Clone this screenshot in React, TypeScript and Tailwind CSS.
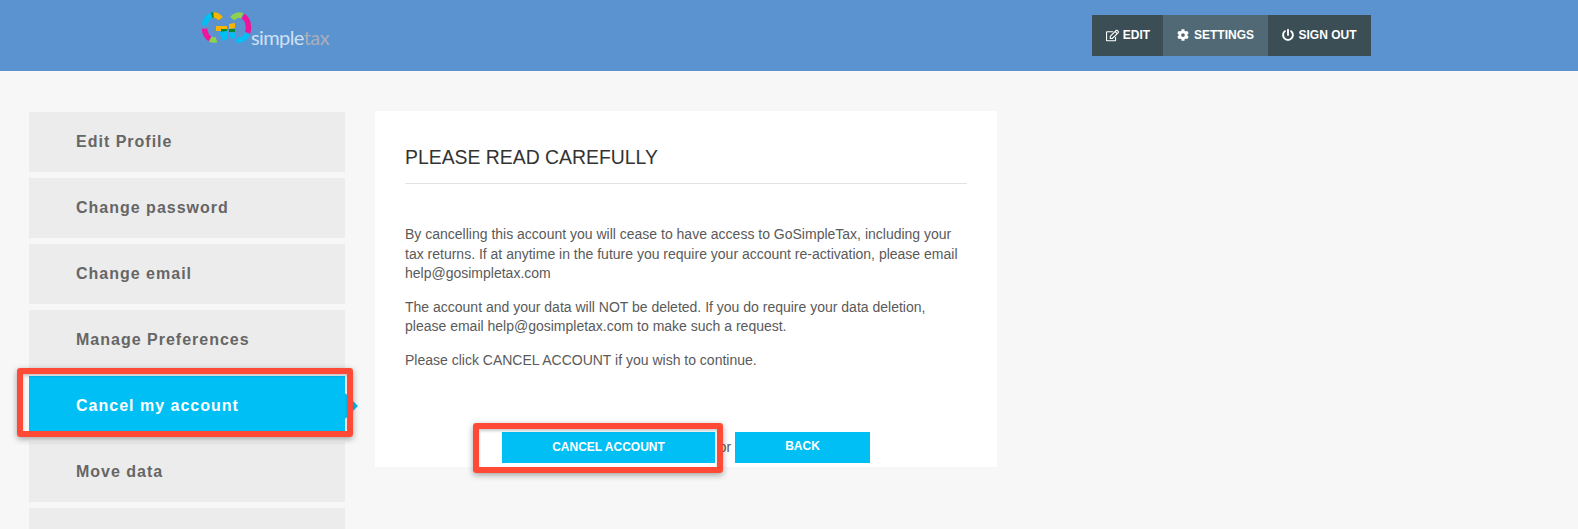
import { FaCog, FaPowerOff, FaRegEdit } from "react-icons/fa";

const sans = "font-['Liberation_Sans',Arial,sans-serif]";

const menuItems = [
  "Edit Profile",
  "Change password",
  "Change email",
  "Manage Preferences",
  "Cancel my account",
  "Move data",
  "",
];

// oval ring segment from angle a to b (degrees, clockwise from top)
function arc(cx: number, cy: number, a: number, b: number) {
  const rx = 9.5;
  const ry = 12.5;
  const p = (d: number) => {
    const t = (d * Math.PI) / 180;
    return `${(cx + rx * Math.sin(t)).toFixed(2)} ${(cy - ry * Math.cos(t)).toFixed(2)}`;
  };
  return `M${p(a)}A${rx} ${ry} 0 0 1 ${p(b)}`;
}

function Logo() {
  const segments: [number, number, number, number, string][] = [
    [214, 27.5, 280, 345, "#00bff5"],
    [214, 27.5, 345, 358, "#0a8a2c"],
    [214, 27.5, 358, 45, "#f7b500"],
    [214, 27.5, 205, 265, "#f0149a"],
    [214, 27.5, 165, 203, "#8fd14f"],
    [239, 27.5, 315, 20, "#8fd14f"],
    [239, 27.5, 25, 115, "#f0149a"],
    [239, 27.5, 120, 195, "#00bff5"],
  ];
  return (
    <div className="relative ml-[195px] h-[71px] w-[145px]">
      <svg width="70" height="45" viewBox="195 5 70 45" className="absolute left-0 top-[5px] block">
        {segments.map(([cx, cy, a, b, c], i) => (
          <path key={i} d={arc(cx, cy, a, b)} fill="none" stroke={c} strokeWidth="5.5" />
        ))}
        <path d="M216 26h11v5h-11z" fill="#f7b500" />
        <path d="M221 29h6v3h-6z" fill="#0a8a2c" />
        <path d="M219 32l8-1v8l-4 2z" fill="#00bff5" />
        <path d="M229 24l6-1v5l-6 1z" fill="#f7b500" />
        <path d="M229 29h6v3h-6z" fill="#0a8a2c" />
        <path d="M229 32l7 1-1 5-4 1z" fill="#00bff5" />
      </svg>
      <span className="absolute left-[56px] top-[24px] font-['Lato',sans-serif] text-[20px] font-normal leading-[26px] tracking-[-0.6px] text-[#cfe0f2]">
        simple<span className="text-[#a9afb8]">tax</span>
      </span>
    </div>
  );
}

export default function App() {
  return (
    <div className={`relative h-[529px] w-[1578px] overflow-hidden bg-[#f7f7f7] ${sans}`}>
      <header className="flex h-[71px] bg-[#5b93d1]">
        <Logo />
        <nav className="ml-[752px] mt-[15px] flex h-[41px] text-[12px] font-bold text-white">
          <a className="flex w-[71px] items-center justify-center gap-[4px] bg-[#3b4e55] pb-[1px] pl-[1px]">
            <FaRegEdit size={13} />
            EDIT
          </a>
          <a className="flex w-[105px] items-center justify-center gap-[5px] bg-[#506974] pb-[1px]">
            <FaCog size={12} />
            SETTINGS
          </a>
          <a className="flex w-[103px] items-center justify-center gap-[4px] bg-[#3b4e55] pb-[1px]">
            <FaPowerOff size={12} />
            SIGN OUT
          </a>
        </nav>
      </header>

      <main className="flex items-start pl-[29px] pt-[41px]">
        <aside className="flex w-[316px] flex-col gap-[6px]">
          {menuItems.map((label, i) => (
            <div
              key={i}
              className={
                label === "Cancel my account"
                  ? "relative flex h-[60px] items-center bg-[#00bff5] pl-[47px] text-[16px] font-bold tracking-[1px] text-white"
                  : "flex h-[60px] items-center bg-[#ececec] pl-[47px] text-[16px] font-bold tracking-[1px] text-[#666666]"
              }
            >
              {label}
              {label === "Cancel my account" && (
                <span className="absolute left-full top-[17px] border-y-[13px] border-l-[13px] border-y-transparent border-l-[#00bff5]" />
              )}
            </div>
          ))}
        </aside>

        <section className="-mt-[1px] ml-[30px] h-[356px] w-[622px] bg-white px-[30px] pt-[35px]">
          <h1 className="border-b border-[#e2e2e2] pb-[14px] text-[19.4px] leading-[23px] text-[#333333]">
            PLEASE READ CAREFULLY
          </h1>
          <div className="mt-[41px] space-y-[14px] text-[14px] leading-[19.6px] text-[#5a5a5a]">
            <p>
              By cancelling this account you will cease to have access to GoSimpleTax, including your
              <br />
              tax returns. If at anytime in the future you require your account re-activation, please email
              <br />
              help@gosimpletax.com
            </p>
            <p>
              The account and your data will NOT be deleted. If you do require your data deletion,
              <br />
              please email help@gosimpletax.com to make such a request.
            </p>
            <p>Please click CANCEL ACCOUNT if you wish to continue.</p>
          </div>
          <div className="mt-[61px] ml-[97px] flex h-[31px] items-center text-[14px] text-[#5a5a5a]">
            <button className="h-[31px] w-[213px] bg-[#00bff5] text-[12px] font-bold text-white">
              CANCEL ACCOUNT
            </button>
            <span className="w-[20px] text-center">or</span>
            <button className="h-[31px] w-[135px] bg-[#00bff5] pb-[2px] text-[12px] font-bold text-white">
              BACK
            </button>
          </div>
        </section>
      </main>

      {/* annotation boxes drawn on top of the screenshot */}
      <div className="absolute left-[17px] top-[368px] h-[69px] w-[336px] rounded-[3px] border-[6px] border-[#ff4a38] shadow-[0_2px_6px_rgba(0,0,0,0.35),inset_0_2px_3px_rgba(0,0,0,0.2)]" />
      <div className="absolute left-[473px] top-[423px] h-[50px] w-[250px] rounded-[3px] border-[6px] border-[#ff4a38] shadow-[0_2px_6px_rgba(0,0,0,0.35),inset_0_2px_3px_rgba(0,0,0,0.2)]" />
    </div>
  );
}
